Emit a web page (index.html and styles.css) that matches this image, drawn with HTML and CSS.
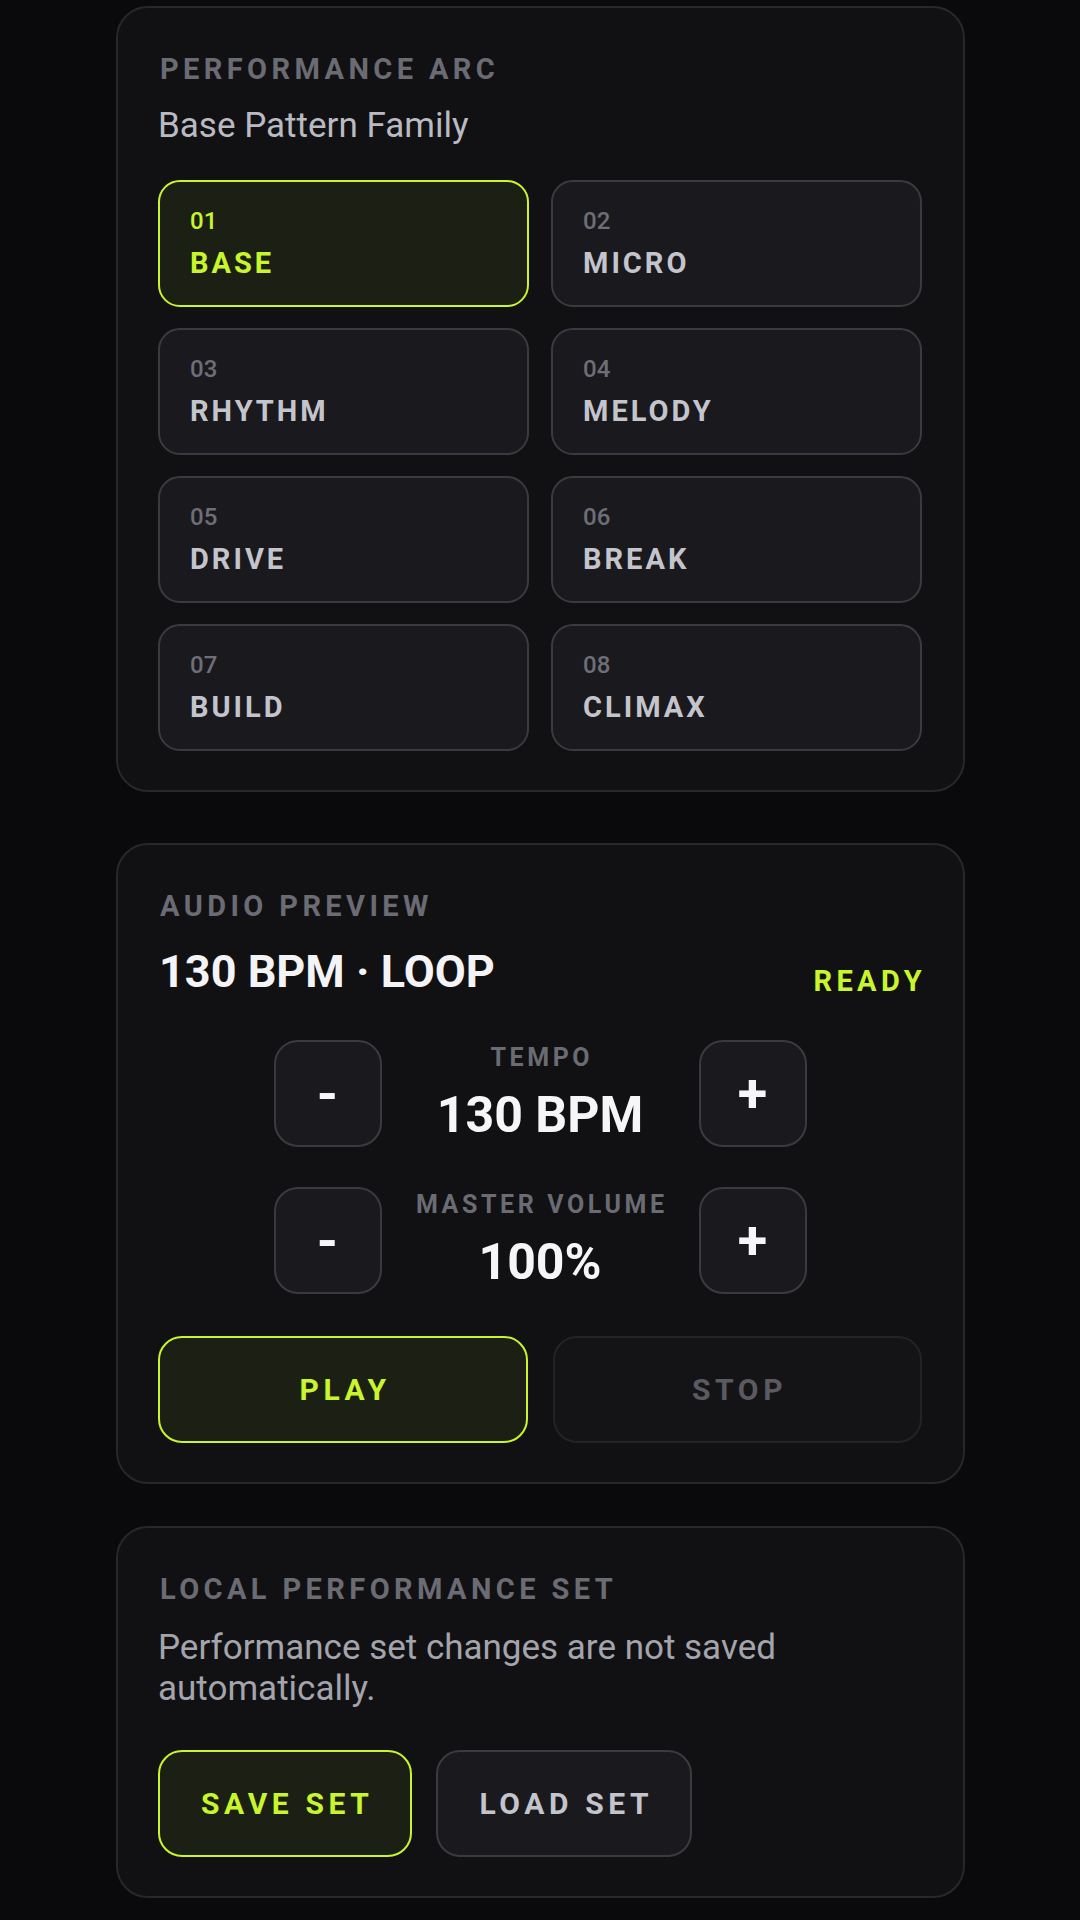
FILE: index.html
```html
<!DOCTYPE html>
<html lang="en">
<head>
<meta charset="utf-8">
<title>Performance</title>
<link rel="stylesheet" href="styles.css">
</head>
<body>
<main class="page">
  <section class="card card-arc">
    <h2 class="card-title">PERFORMANCE ARC</h2>
    <p class="card-sub">Base Pattern Family</p>
    <div class="pattern-grid">
      <button class="pattern is-active"><span class="pattern-num">01</span><span class="pattern-name">BASE</span></button>
      <button class="pattern"><span class="pattern-num">02</span><span class="pattern-name">MICRO</span></button>
      <button class="pattern"><span class="pattern-num">03</span><span class="pattern-name">RHYTHM</span></button>
      <button class="pattern"><span class="pattern-num">04</span><span class="pattern-name">MELODY</span></button>
      <button class="pattern"><span class="pattern-num">05</span><span class="pattern-name">DRIVE</span></button>
      <button class="pattern"><span class="pattern-num">06</span><span class="pattern-name">BREAK</span></button>
      <button class="pattern"><span class="pattern-num">07</span><span class="pattern-name">BUILD</span></button>
      <button class="pattern"><span class="pattern-num">08</span><span class="pattern-name">CLIMAX</span></button>
    </div>
  </section>

  <section class="card card-audio">
    <h2 class="card-title">AUDIO PREVIEW</h2>
    <div class="audio-head">
      <span class="audio-status">130 BPM · LOOP</span>
      <span class="audio-ready">READY</span>
    </div>
    <div class="stepper stepper-first">
      <button class="step-btn">-</button>
      <div class="step-info">
        <span class="step-label">TEMPO</span>
        <span class="step-value">130 BPM</span>
      </div>
      <button class="step-btn">+</button>
    </div>
    <div class="stepper stepper-second">
      <button class="step-btn">-</button>
      <div class="step-info">
        <span class="step-label">MASTER VOLUME</span>
        <span class="step-value">100%</span>
      </div>
      <button class="step-btn">+</button>
    </div>
    <div class="transport">
      <button class="action action-primary">PLAY</button>
      <button class="action action-disabled">STOP</button>
    </div>
  </section>

  <section class="card card-set">
    <h2 class="card-title">LOCAL PERFORMANCE SET</h2>
    <p class="card-desc">Performance set changes are not saved automatically.</p>
    <div class="set-actions">
      <button class="action action-primary action-inline">SAVE SET</button>
      <button class="action action-secondary action-inline">LOAD SET</button>
    </div>
  </section>
</main>
</body>
</html>
```

FILE: styles.css
```css
* {
  box-sizing: border-box;
}

html, body {
  margin: 0;
  padding: 0;
  background: #0a0a0c;
}

body {
  font-family: Roboto, "Noto Sans", "Liberation Sans", sans-serif;
  color: #c4c4cc;
}

.page {
  width: 1080px;
  padding: 6px 115px 0 116px;
  display: flex;
  flex-direction: column;
}

.card {
  background: #111114;
  border: 2px solid #27272c;
  border-radius: 32px;
  padding: 44px 41px 39px 40px;
}

.card-audio {
  margin-top: 51px;
}

.card-set {
  margin-top: 42px;
}

.card-title {
  margin: 0 0 0 2px;
  font-size: 29px;
  line-height: 34px;
  font-weight: 700;
  letter-spacing: 4.4px;
  color: #6b6b74;
}

.card-sub {
  margin: 19px 0 0;
  font-size: 35px;
  line-height: 41px;
  font-weight: 400;
  color: #babac2;
}

.pattern-grid {
  margin-top: 34px;
  display: grid;
  grid-template-columns: 1fr 1fr;
  grid-auto-rows: 127px;
  column-gap: 22px;
  row-gap: 21px;
}

.pattern {
  font-family: inherit;
  display: flex;
  flex-direction: column;
  justify-content: center;
  align-items: flex-start;
  gap: 11px;
  padding: 0 30px;
  background: #1a1a1e;
  border: 2px solid #3a3a40;
  border-radius: 22px;
  text-align: left;
}

.pattern-num {
  font-size: 24px;
  line-height: 28px;
  font-weight: 500;
  color: #6e6e77;
}

.pattern-name {
  font-size: 29px;
  line-height: 34px;
  font-weight: 700;
  letter-spacing: 3px;
  color: #c4c4cc;
}

.pattern.is-active {
  background: #1c2014;
  border-color: #c8f52c;
}

.pattern.is-active .pattern-num,
.pattern.is-active .pattern-name {
  color: #c8f52c;
}

.audio-head {
  margin-top: 22px;
  display: flex;
  justify-content: space-between;
  align-items: flex-end;
}

.audio-status {
  margin-left: 1px;
  font-size: 45px;
  line-height: 53px;
  font-weight: 700;
  color: #f4f4f6;
}

.audio-ready {
  font-size: 29px;
  line-height: 34px;
  font-weight: 700;
  letter-spacing: 4.4px;
  margin-right: -4px;
  color: #c8f52c;
}

.stepper {
  display: grid;
  grid-template-columns: 108px 281px 108px;
  column-gap: 18px;
  justify-content: center;
  align-items: center;
}

.stepper-first {
  margin-top: 42px;
}

.stepper-second {
  margin-top: 40px;
}

.step-btn {
  font-family: inherit;
  height: 107px;
  width: 108px;
  background: #1a1a1e;
  border: 2px solid #3a3a40;
  border-radius: 24px;
  color: #f6f6f8;
  font-size: 54px;
  font-weight: 700;
  line-height: 1;
  display: flex;
  align-items: center;
  justify-content: center;
  padding: 0;
}

.step-info {
  display: flex;
  flex-direction: column;
  align-items: center;
  gap: 14px;
}

.step-label {
  font-size: 25px;
  line-height: 30px;
  font-weight: 700;
  letter-spacing: 3.6px;
  margin-right: -3.6px;
  color: #6b6b74;
}

.step-value {
  font-size: 50px;
  line-height: 57px;
  font-weight: 700;
  color: #f6f6f8;
}

.transport {
  margin-top: 42px;
  display: grid;
  grid-template-columns: 1fr 1fr;
  column-gap: 25px;
}

.action {
  font-family: inherit;
  height: 107px;
  border-radius: 24px;
  font-size: 30px;
  font-weight: 700;
  letter-spacing: 4.6px;
  display: flex;
  align-items: center;
  justify-content: center;
  padding: 0 0 0 4.6px;
}

.action-primary {
  background: #1c2014;
  border: 2px solid #c8f52c;
  color: #c8f52c;
}

.action-disabled {
  background: #141417;
  border: 2px solid #232327;
  color: #5a5a60;
}

.action-secondary {
  background: #1a1a1e;
  border: 2px solid #3a3a40;
  color: #c4c4cc;
}

.card-desc {
  margin: 21px 0 0;
  font-size: 35px;
  line-height: 41px;
  font-weight: 400;
  color: #a4a4ac;
}

.set-actions {
  margin-top: 41px;
  display: flex;
  gap: 24px;
}

.action-inline {
  padding: 0 37px 0 41px;
}
```
